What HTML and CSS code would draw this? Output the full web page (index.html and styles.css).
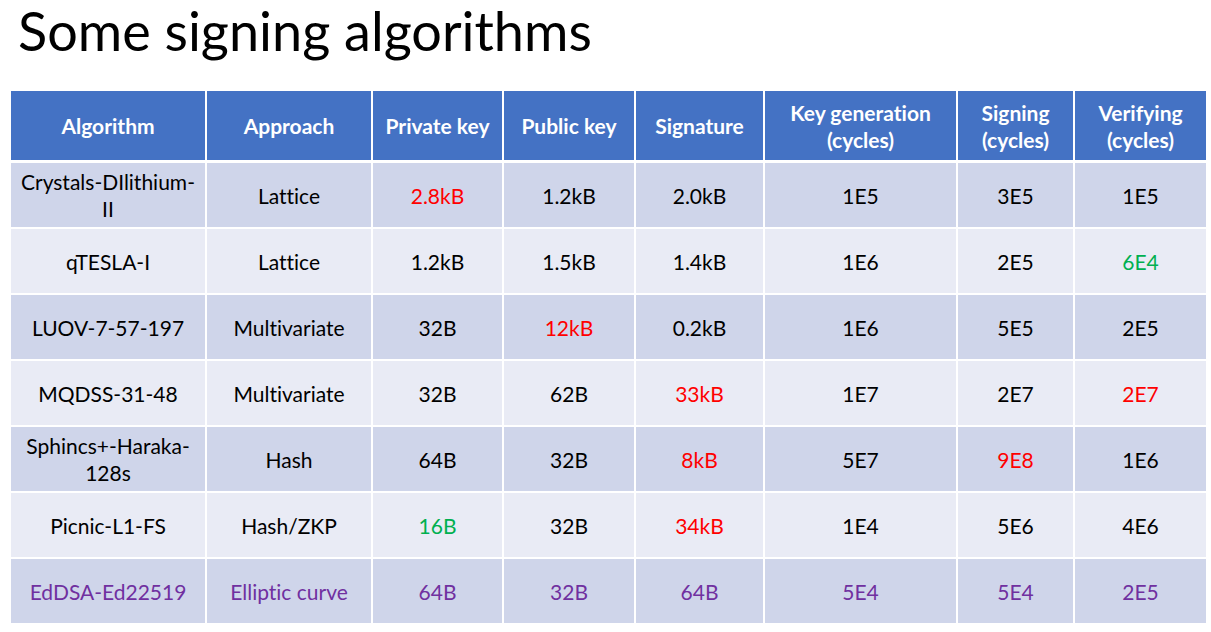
FILE: index.html
```html
<!DOCTYPE html>
<html>
<head>
<meta charset="utf-8">
<link rel="stylesheet" href="styles.css">
</head>
<body>
<h1 class="title">Some signing algorithms</h1>
<table class="algos">
  <colgroup>
    <col class="c1"><col class="c2"><col class="c3"><col class="c4"><col class="c5"><col class="c6"><col class="c7"><col class="c8">
  </colgroup>
  <thead>
    <tr>
      <th>Algorithm</th><th>Approach</th><th>Private key</th><th>Public key</th><th>Signature</th><th>Key generation<br>(cycles)</th><th>Signing<br>(cycles)</th><th>Verifying<br>(cycles)</th>
    </tr>
  </thead>
  <tbody>
    <tr class="odd"><td>Crystals-DIlithium-<br>II</td><td>Lattice</td><td class="red">2.8kB</td><td>1.2kB</td><td>2.0kB</td><td>1E5</td><td>3E5</td><td>1E5</td></tr>
    <tr class="even"><td>qTESLA-I</td><td>Lattice</td><td>1.2kB</td><td>1.5kB</td><td>1.4kB</td><td>1E6</td><td>2E5</td><td class="green">6E4</td></tr>
    <tr class="odd"><td>LUOV-7-57-197</td><td>Multivariate</td><td>32B</td><td class="red">12kB</td><td>0.2kB</td><td>1E6</td><td>5E5</td><td>2E5</td></tr>
    <tr class="even"><td>MQDSS-31-48</td><td>Multivariate</td><td>32B</td><td>62B</td><td class="red">33kB</td><td>1E7</td><td>2E7</td><td class="red">2E7</td></tr>
    <tr class="odd"><td>Sphincs+-Haraka-<br>128s</td><td>Hash</td><td>64B</td><td>32B</td><td class="red">8kB</td><td>5E7</td><td class="red">9E8</td><td>1E6</td></tr>
    <tr class="even"><td>Picnic-L1-FS</td><td>Hash/ZKP</td><td class="green">16B</td><td>32B</td><td class="red">34kB</td><td>1E4</td><td>5E6</td><td>4E6</td></tr>
    <tr class="odd purple"><td>EdDSA-Ed22519</td><td>Elliptic curve</td><td>64B</td><td>32B</td><td>64B</td><td>5E4</td><td>5E4</td><td>2E5</td></tr>
  </tbody>
</table>
</body>
</html>
```
FILE: styles.css
```css
html, body {
  margin: 0;
  padding: 0;
  background: #ffffff;
}
body {
  font-family: Lato, "Open Sans", "Liberation Sans", sans-serif;
  font-variant-ligatures: none;
  font-feature-settings: "liga" 0, "clig" 0, "dlig" 0;
  color: #000000;
}
.title {
  margin: 0;
  padding: 1px 0 0 18px;
  height: 85px;
  box-sizing: border-box;
  font-weight: 400;
  font-size: 54px;
  line-height: 60px;
  letter-spacing: 0;
}
.algos {
  margin-left: 9px;
  margin-top: 6px;
  border-collapse: collapse;
  table-layout: fixed;
  width: 1197px;
}
.c1 { width: 196px; }
.c2 { width: 166px; }
.c3 { width: 131px; }
.c4 { width: 132px; }
.c5 { width: 129px; }
.c6 { width: 193px; }
.c7 { width: 117px; }
.c8 { width: 133px; }
.algos th, .algos td {
  border: 2px solid #ffffff;
  text-align: center;
  vertical-align: middle;
  font-size: 21px;
  line-height: 27px;
  padding: 0 4px;
}
.algos th {
  background: #4472c4;
  color: #ffffff;
  font-weight: 700;
  height: 69px;
  border-bottom-width: 3px;
  border-top: none;
}
.algos td {
  height: 64px;
}
.odd td { background: #cfd5ea; }
.even td { background: #e9ebf5; }
.red { color: #ff0000; }
.green { color: #00b050; }
.purple td { color: #7030a0; }
```
